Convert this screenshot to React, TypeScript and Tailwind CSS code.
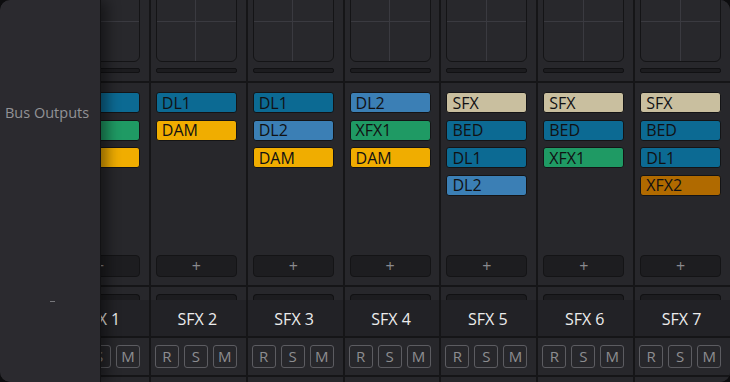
import React from "react";

type Col = { name: string; buses: string[]; hidden?: boolean };

const cols: Col[] = [
  { name: "SFX 1", buses: ["DL1", "XFX1", "DAM"], hidden: true },
  { name: "SFX 2", buses: ["DL1", "DAM"] },
  { name: "SFX 3", buses: ["DL1", "DL2", "DAM"] },
  { name: "SFX 4", buses: ["DL2", "XFX1", "DAM"] },
  { name: "SFX 5", buses: ["SFX", "BED", "DL1", "DL2"] },
  { name: "SFX 6", buses: ["SFX", "BED", "XFX1"] },
  { name: "SFX 7", buses: ["SFX", "BED", "DL1", "XFX2"] },
];

const busColor: Record<string, string> = {
  DL1: "bg-[#0c6a93]",
  BED: "bg-[#0c6a93]",
  DL2: "bg-[#3b7fb5]",
  DAM: "bg-[#f0ad00]",
  XFX1: "bg-[#1f9a64]",
  SFX: "bg-[#c9bf9f]",
  XFX2: "bg-[#b06a00]",
};

function Strip({ col }: { col: Col }) {
  return (
    <div className="flex flex-col border-l-2 border-[#151517] bg-[#27272b] min-w-0">
      {/* XY pad section */}
      <div className="h-[83px] border-b-2 border-[#151517] pl-[5px] overflow-hidden">
        <div className="mt-[-18px] h-[80px] w-[81px] rounded-[6px] border-[1.5px] border-[#141416] bg-[#28282c] grid grid-cols-2 grid-rows-2 overflow-hidden">
          <div className="border-r border-b border-[#3a3a40]" />
          <div className="border-b border-[#3a3a40]" />
          <div className="border-r border-[#3a3a40]" />
          <div />
        </div>
        <div className="mt-[6px] h-[5px] w-[81px] rounded-[2px] border border-[#111113] bg-[#1c1c1f]" />
      </div>
      {/* bus outputs */}
      <div className="h-[172px] pt-[9px] pl-[5px] flex flex-col gap-[6.5px]">
        {col.buses.map((b, i) => (
          <div
            key={i}
            className={`h-[21px] w-[81px] shrink-0 rounded-[3px] border border-[#141416] ${busColor[b]} flex items-center pl-[5px] text-[16px] leading-none text-[#111113]`}
          >
            {col.hidden ? "" : b}
          </div>
        ))}
      </div>
      <div className="pl-[5px]">
        <div className="h-[22px] w-[81px] rounded-[4px] border border-[#141416] bg-[#1d1d20] flex items-center justify-center text-[#8a8a8e] text-[16px] leading-none">
          +
        </div>
      </div>
      <div className="h-[8px] border-b-2 border-[#151517] box-content" />
      <div className="pl-[5px] pt-[7px]">
        <div className="h-[6px] w-[81px] rounded-t-[4px] border-x border-t border-[#111113] bg-[#1c1c1f]" />
      </div>
      {/* name row */}
      <div className="h-[34px] border-b-2 border-[#151517] bg-[#222226] flex items-center justify-center pr-[2px] pt-[2px] text-[16px] text-[#ececec] box-content">
        {col.name}
      </div>
      {/* R S M */}
      <div className="pt-[7px] pb-[7px] pl-[4px] flex gap-[5px] border-b-2 border-[#151517]">
        {["R", "S", "M"].map((l) => (
          <div
            key={l}
            className="h-[23px] w-[24px] rounded-[3px] border-[1.5px] border-[#5c5c61] flex items-center justify-center text-[15px] leading-none text-[#8d8d90]"
          >
            {l}
          </div>
        ))}
      </div>
      <div className="flex-1" />
    </div>
  );
}

export default function App() {
  return (
    <div
      className="w-[730px] h-[382px] bg-[#0d0d0f] overflow-hidden"
      style={{ fontFamily: '"Open Sans", "Noto Sans", sans-serif' }}
    >
      <div className="relative w-full h-full rounded-[10px] overflow-hidden bg-[#27272b]">
        <div className="ml-[52px] w-[678px] h-full grid grid-cols-7">
          {cols.map((c) => (
            <Strip key={c.name} col={c} />
          ))}
        </div>
        {/* overlay left panel */}
        <div className="absolute left-0 top-0 bottom-0 w-[101px] bg-[#2b2a2f] border-r border-[#121214] rounded-l-[10px] shadow-[6px_0_14px_rgba(0,0,0,0.45)] flex flex-col">
          <div className="h-[104px]" />
          <div className="pl-[5px] text-[14.5px] leading-[18px] text-[#929296] whitespace-nowrap">Bus Outputs</div>
          <div className="h-[179px]" />
          <div className="ml-[50px] h-px w-[5px] bg-[#77777b]" />
        </div>
      </div>
    </div>
  );
}
